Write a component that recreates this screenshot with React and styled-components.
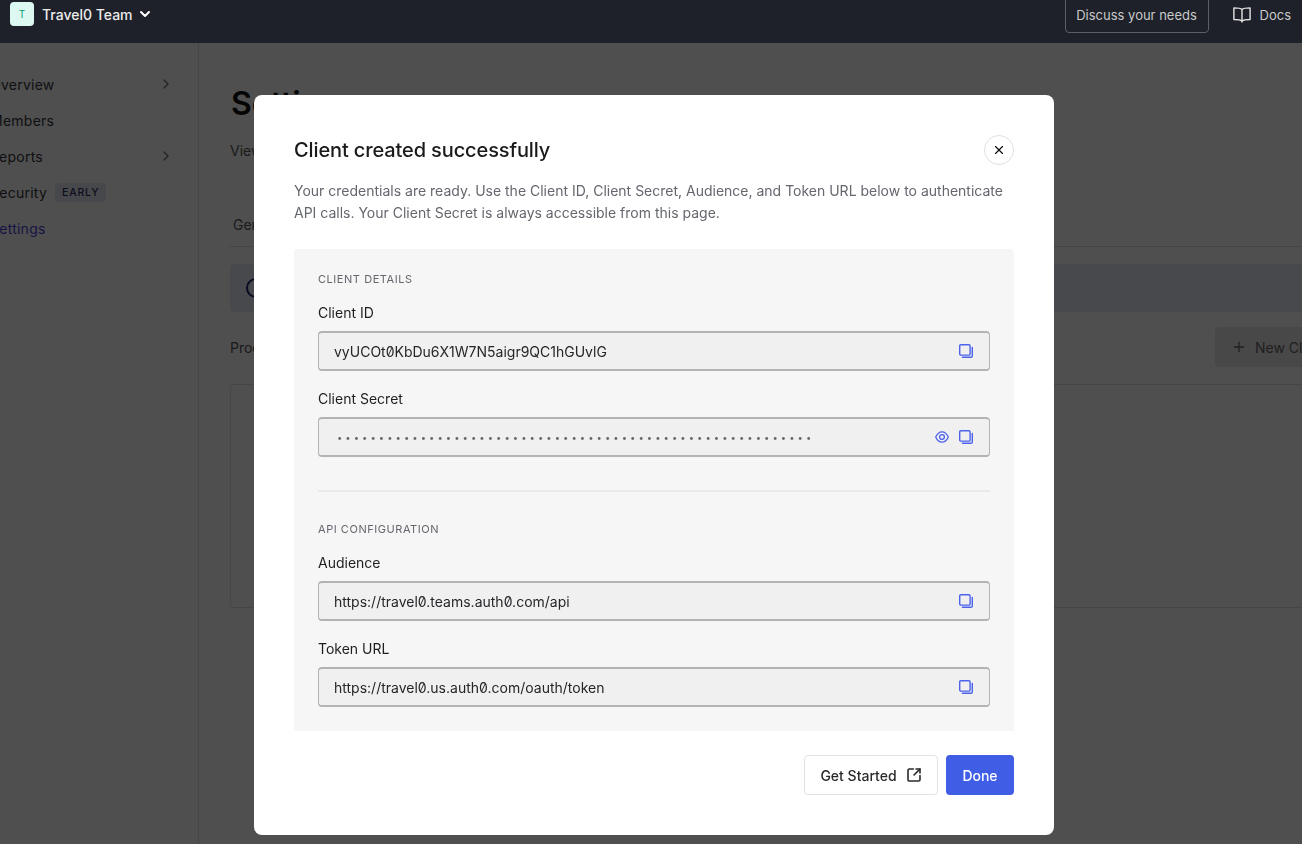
import React from 'react';
import styled, { createGlobalStyle } from 'styled-components';
import { ChevronRight, ChevronDown, Plus, X, SquareArrowOutUpRight } from 'lucide-react';

const GlobalStyle = createGlobalStyle`
  html, body {
    margin: 0;
    padding: 0;
    height: 100%;
    overflow: hidden;
    background: #fff;
    font-family: Inter, "Liberation Sans", sans-serif;
  }
  * { box-sizing: border-box; }
`;

const Page = styled.div`
  width: 1302px;
  height: 844px;
  overflow: hidden;
`;
const TopBar = styled.header`
  position: relative;
  z-index: 2;
  height: 43px;
  padding: 0 11px 15px 10px;
  display: flex;
  align-items: center;
  background: #1e212a;
  color: #fff;
`;
const Logo = styled.div`
  width: 24px;
  height: 24px;
  border-radius: 4px;
  background: #dcf8f1;
  color: #0aa17f;
  font-size: 10px;
  display: flex;
  align-items: center;
  justify-content: center;
`;
const TeamName = styled.span`
  margin-left: 8px;
  font-size: 14px;
  font-weight: 500;
  color: #ececec;
`;
const TeamCaret = styled(ChevronDown)`
  margin-left: 4px;
  color: #fff;
`;
const Spacer = styled.div`
  flex: 1;
`;
const DiscussButton = styled.div`
  width: 144px;
  height: 38px;
  padding-top: 2px;
  border: 1px solid #5c5f66;
  border-radius: 4px;
  display: flex;
  align-items: center;
  justify-content: center;
  font-size: 13px;
  color: #c9c9c9;
`;
const DocsLink = styled.div`
  margin-left: 24px;
  padding-top: 2px;
  display: flex;
  align-items: center;
  gap: 9px;
  font-size: 13px;
  color: #c9c9c9;
`;
const Body = styled.div`
  display: flex;
  height: 801px;
`;
const Sidebar = styled.nav`
  flex: none;
  width: 213px;
  margin-left: -14px;
  padding: 23px 24px 0 4px;
  border-right: 1px solid #ddd;
  display: flex;
  flex-direction: column;
`;
const NavItem = styled.div`
  height: 36px;
  display: flex;
  align-items: center;
  gap: 8px;
  font-size: 14px;
  letter-spacing: 0.25px;
  color: ${p => (p.$active ? '#4b43d9' : '#33363c')};
`;
const NavChevron = styled(ChevronRight)`
  margin-left: auto;
  color: #777;
`;
const Badge = styled.span`
  padding: 3px 7px;
  border-radius: 4px;
  background: #e6e8f2;
  color: #2a2d5e;
  font-size: 10.5px;
  font-weight: 500;
  letter-spacing: 0.8px;
`;
const Main = styled.main`
  flex: 1;
  min-width: 0;
  padding: 41px 0 0 31px;
`;
const PageTitle = styled.h1`
  margin: 0 0 0 1px;
  font-size: 32px;
  line-height: 40px;
  font-weight: 600;
  color: #111;
`;
const PageText = styled.p`
  margin: 16px 0 0;
  font-size: 14px;
  line-height: 22px;
  color: #555;
`;
const Tabs = styled.div`
  margin-top: 52px;
  padding: 0 3px 10px;
  border-bottom: 1px solid #ddd;
  font-size: 14px;
  line-height: 22px;
  color: #555;
`;
const Banner = styled.div`
  height: 48px;
  margin-top: 17px;
  padding-left: 16px;
  display: flex;
  align-items: center;
  background: #e8eaf6;
  border-radius: 4px 0 0 4px;
`;
const BannerDot = styled.div`
  width: 20px;
  height: 20px;
  border: 2px solid #1c2270;
  border-radius: 50%;
`;
const ProgramRow = styled.div`
  height: 40px;
  margin-top: 15px;
  display: flex;
  align-items: center;
  justify-content: space-between;
  font-size: 14px;
  color: #555;
`;
const NewButton = styled.div`
  flex: none;
  width: 160px;
  height: 40px;
  padding-left: 16px;
  margin-right: -73px;
  display: flex;
  align-items: center;
  gap: 8px;
  background: #e8e8e8;
  border-radius: 4px;
  font-size: 14px;
  color: #666;
`;
const EmptyCard = styled.div`
  height: 224px;
  margin-top: 17px;
  border: 1px solid #ddd;
  border-right: 0;
  border-radius: 4px 0 0 4px;
`;

const Overlay = styled.div`
  position: fixed;
  inset: 0;
  z-index: 1;
  padding: 95px 0 0 254px;
  background: rgba(0, 0, 0, 0.69);
  will-change: transform;
`;
const Modal = styled.section`
  width: 800px;
  height: 740px;
  padding: 40px;
  background: #fff;
  border-radius: 8px;
`;
const ModalHeader = styled.div`
  height: 30px;
  display: flex;
  align-items: center;
  justify-content: space-between;
`;
const ModalTitle = styled.h2`
  margin: 0;
  font-size: 20px;
  font-weight: 500;
  letter-spacing: -0.12px;
  color: #1a1a1a;
`;
const CloseButton = styled.div`
  width: 30px;
  height: 30px;
  border: 1px solid #e0e0e0;
  border-radius: 50%;
  display: flex;
  align-items: center;
  justify-content: center;
  color: #111;
`;
const Description = styled.p`
  margin: 15px 0 25px;
  font-size: 14px;
  line-height: 22px;
  color: #65676e;
`;
const Panel = styled.div`
  height: 482px;
  padding: 24px;
  background: #f6f6f6;
  border-radius: 4px 4px 0 0;
`;
const SectionLabel = styled.div`
  height: 13px;
  font-size: 11px;
  line-height: 13px;
  letter-spacing: 0.55px;
  color: #65676e;
`;
const FieldLabel = styled.div`
  margin-top: ${p => (p.$first ? '17px' : '18px')};
  margin-bottom: 8px;
  font-size: 14px;
  line-height: 20px;
  color: #1f1f1f;
`;
const FieldBox = styled.div`
  height: 40px;
  padding: 0 16px 0 15px;
  display: flex;
  align-items: center;
  background: #f0f0f0;
  border: 1px solid #b3b3b3;
  border-width: 2px 1px;
  border-radius: 4px;
  font-size: 14px;
  color: #26262a;
  font-feature-settings: 'zero' 1;
`;
const FieldValue = styled.span`
  flex: 1;
  white-space: nowrap;
`;
const MaskedValue = styled(FieldValue)`
  margin-left: 3px;
  font-size: 9.5px;
  letter-spacing: 3.03px;
  color: #6a6a6a;
`;
const FieldIcons = styled.div`
  display: flex;
  align-items: center;
  gap: 10px;
  color: #4d62ec;
`;
const Divider = styled.div`
  height: 2px;
  margin: 33px 0 31px;
  background: #e9e9e9;
`;
const Footer = styled.div`
  margin-top: 24px;
  display: flex;
  justify-content: flex-end;
  gap: 8px;
`;
const GhostButton = styled.div`
  width: 134px;
  height: 40px;
  border: 1px solid #e2e2e2;
  border-radius: 4px;
  display: flex;
  align-items: center;
  justify-content: center;
  gap: 9px;
  font-size: 14px;
  font-weight: 500;
  color: #2a2a2a;
  background: #fff;
`;
const PrimaryButton = styled.div`
  width: 68px;
  height: 40px;
  border-radius: 4px;
  display: flex;
  align-items: center;
  justify-content: center;
  font-size: 14px;
  font-weight: 500;
  color: #fff;
  background: #405de6;
`;

const CopyIcon = () => (
  <svg width="14" height="14" viewBox="0 0 14 14" fill="none" stroke="currentColor" strokeWidth="1.4">
    <rect x="0.7" y="0.7" width="10.4" height="10.4" rx="1.2" />
    <path d="M13.3 3.400v8.500a1.400 1.400 0 0 1-1.400 1.400H3.400" strokeLinecap="round" />
  </svg>
);

const EyeIcon = () => (
  <svg width="14" height="14" viewBox="0 0 14 14" fill="none" stroke="currentColor" strokeWidth="1.3">
    <path d="M0.700 7C2.200 3.600 4.400 1.800 7 1.800S11.800 3.600 13.300 7C11.800 10.400 9.600 12.200 7 12.200S2.200 10.400 0.700 7z" />
    <circle cx="7" cy="7" r="2.400" />
  </svg>
);

const DocsIcon = () => (
  <svg width="18" height="16" viewBox="0 0 18 16" fill="none" stroke="#e4e4e4" strokeWidth="1.400" strokeLinejoin="round">
    <path d="M9 2.500C7.800 1.300 5.500 0.900 0.900 0.900v11.600c4.600 0 6.900.4 8.100 1.600 1.200-1.200 3.500-1.600 8.100-1.600V.9C12.500.9 10.200 1.300 9 2.500z" />
    <path d="M9 2.500v13" />
  </svg>
);

function Field({ value, masked }) {
  return (
    <FieldBox>
      {masked ? <MaskedValue>{value}</MaskedValue> : <FieldValue>{value}</FieldValue>}
      <FieldIcons>
        {masked && <EyeIcon />}
        <CopyIcon />
      </FieldIcons>
    </FieldBox>
  );
}

export default function App() {
  return (
    <Page>
      <GlobalStyle />
      <TopBar>
        <Logo>T</Logo>
        <TeamName>Travel0 Team</TeamName>
        <TeamCaret size={16} strokeWidth={3} />
        <Spacer />
        <DiscussButton>Discuss your needs</DiscussButton>
        <DocsLink>
          <DocsIcon />
          Docs
        </DocsLink>
      </TopBar>
      <Body>
        <Sidebar>
          <NavItem>Overview<NavChevron size={16} /></NavItem>
          <NavItem>Members</NavItem>
          <NavItem>Reports<NavChevron size={16} /></NavItem>
          <NavItem>Security<Badge>EARLY</Badge></NavItem>
          <NavItem $active>Settings</NavItem>
        </Sidebar>
        <Main>
          <PageTitle>Settings</PageTitle>
          <PageText>View and manage your team settings</PageText>
          <Tabs>General</Tabs>
          <Banner><BannerDot /></Banner>
          <ProgramRow>
            Programmatic access
            <NewButton><Plus size={16} />New Client</NewButton>
          </ProgramRow>
          <EmptyCard />
        </Main>
      </Body>
      <Overlay>
        <Modal>
          <ModalHeader>
            <ModalTitle>Client created successfully</ModalTitle>
            <CloseButton><X size={14} strokeWidth={2} /></CloseButton>
          </ModalHeader>
          <Description>
            Your credentials are ready. Use the Client ID, Client Secret, Audience, and Token URL below to authenticate
            API calls. Your Client Secret is always accessible from this page.
          </Description>
          <Panel>
            <SectionLabel>CLIENT DETAILS</SectionLabel>
            <FieldLabel $first>Client ID</FieldLabel>
            <Field value="vyUCOt0KbDu6X1W7N5aigr9QC1hGUvlG" />
            <FieldLabel>Client Secret</FieldLabel>
            <Field masked value={'•'.repeat(57)} />
            <Divider />
            <SectionLabel>API CONFIGURATION</SectionLabel>
            <FieldLabel $first>Audience</FieldLabel>
            <Field value="https://travel0.teams.auth0.com/api" />
            <FieldLabel>Token URL</FieldLabel>
            <Field value="https://travel0.us.auth0.com/oauth/token" />
          </Panel>
          <Footer>
            <GhostButton>Get Started<SquareArrowOutUpRight size={16} strokeWidth={2.4} /></GhostButton>
            <PrimaryButton>Done</PrimaryButton>
          </Footer>
        </Modal>
      </Overlay>
    </Page>
  );
}
